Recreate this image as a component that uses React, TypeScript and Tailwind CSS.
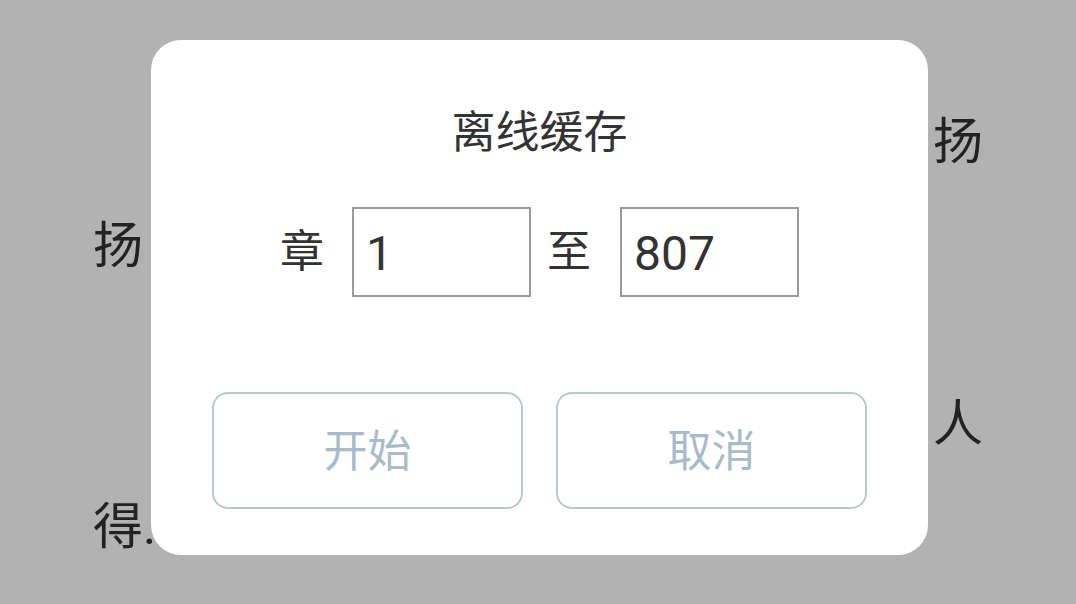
import React from "react";

export default function App() {
  const font = "font-['Roboto','Noto_Sans_CJK_SC',sans-serif]";
  return (
    <div className={`relative w-[1076px] h-[604px] overflow-hidden bg-[#b2b2b2] ${font}`}>
      {/* background reading page */}
      <div className="flex flex-col px-[93px] pt-[117px] text-[50px] leading-[50px] text-[#222]">
        <div className="text-right">扬</div>
        <div className="mt-[54px]">扬</div>
        <div className="mt-[128px] text-right">人</div>
        <div className="mt-[53px]">得.</div>
      </div>

      {/* dialog */}
      <div className="absolute left-[151px] top-[40px] w-[777px] h-[515px] rounded-[30px] bg-white flex flex-col pt-[71px]">
        <div className="text-center text-[44px] leading-[44px] text-[#333]">离线缓存</div>
        <div className="mt-[52px] flex items-center justify-center">
          <span className="text-[44px] leading-[44px] text-[#333] mr-[28px]">章</span>
          <input
            readOnly
            value="1"
            className="w-[179px] h-[90px] border-2 border-[#9a9a9a] px-[12px] pt-[3px] text-[48px] text-[#333] outline-none bg-white font-['Roboto',sans-serif]"
          />
          <span className="text-[44px] leading-[44px] text-[#333] ml-[16px] mr-[29px]">至</span>
          <input
            readOnly
            value="807"
            className="w-[179px] h-[90px] border-2 border-[#9a9a9a] px-[12px] pt-[3px] text-[48px] text-[#333] outline-none bg-white font-['Roboto',sans-serif]"
          />
        </div>
        <div className="mt-[95px] flex gap-[33px] px-[61px]">
          <button className="flex-1 h-[117px] rounded-[16px] border-2 border-[#b9c8d4] bg-white pt-[3px] text-[44px] text-[#a7bbca] flex items-center justify-center">
            开始
          </button>
          <button className="flex-1 h-[117px] rounded-[16px] border-2 border-[#b9c8d4] bg-white pt-[3px] text-[44px] text-[#a7bbca] flex items-center justify-center">
            取消
          </button>
        </div>
      </div>
    </div>
  );
}
